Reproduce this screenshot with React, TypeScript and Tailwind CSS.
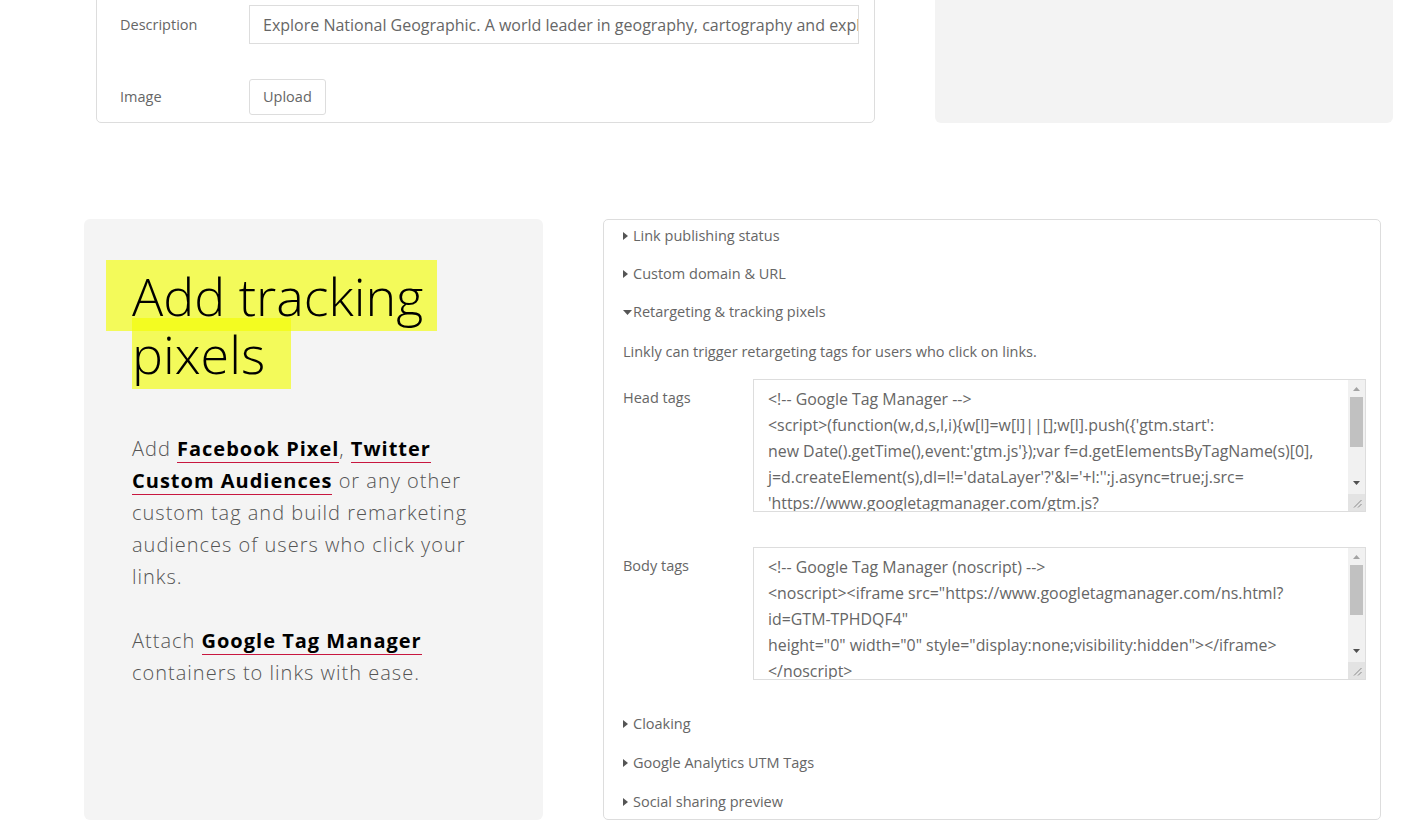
import type { ReactNode } from 'react';

const headLines = [
  '<!-- Google Tag Manager -->',
  "<script>(function(w,d,s,l,i){w[l]=w[l]||[];w[l].push({'gtm.start':",
  "new Date().getTime(),event:'gtm.js'});var f=d.getElementsByTagName(s)[0],",
  "j=d.createElement(s),dl=l!='dataLayer'?'&l='+l:'';j.async=true;j.src=",
  "'https://www.googletagmanager.com/gtm.js?",
  "id='+i+dl;f.parentNode.insertBefore(j,f);",
];

const bodyLines = [
  '<!-- Google Tag Manager (noscript) -->',
  '<noscript><iframe src="https://www.googletagmanager.com/ns.html?',
  'id=GTM-TPHDQF4"',
  'height="0" width="0" style="display:none;visibility:hidden"></iframe>',
  '</noscript>',
  '<!-- End Google Tag Manager (noscript) -->',
];

function Caret({ open }: { open?: boolean }) {
  if (open)
    return (
      <svg width="9" height="5" viewBox="0 0 9 5" className="mr-[1px]">
        <path d="M0 0h9L4.5 5z" fill="#555" />
      </svg>
    );
  return (
    <svg width="5" height="8" viewBox="0 0 5 8" className="mr-[5px]">
      <path d="M0 0l5 4-5 4z" fill="#555" />
    </svg>
  );
}

function Toggle({ label, open, className = '' }: { label: string; open?: boolean; className?: string }) {
  return (
    <div className={`flex h-[20px] items-center text-[14.5px] text-[#666] ${className}`}>
      <Caret open={open} />
      <span>{label}</span>
    </div>
  );
}

function CodeBox({ lines }: { lines: string[] }) {
  return (
    <div className="flex h-[133px] flex-1 border border-[#ddd] bg-white">
      <div className="flex-1 overflow-hidden pl-[14px] pt-[6px] text-[15.9px] leading-[26px] text-[#666]">
        {lines.map((l, i) => (
          <div key={i} className="whitespace-pre">
            {l}
          </div>
        ))}
      </div>
      <div className="flex w-[17px] flex-col bg-[#f1f1f1]">
        <div className="flex h-[17px] items-center justify-center">
          <svg width="7" height="4" viewBox="0 0 7 4">
            <path d="M3.5 0L7 4H0z" fill="#a3a3a3" />
          </svg>
        </div>
        <div className="mx-[2px] h-[50px] bg-[#c1c1c1]" />
        <div className="flex-1" />
        <div className="flex h-[17px] items-center justify-center">
          <svg width="7" height="4" viewBox="0 0 7 4">
            <path d="M0 0h7L3.5 4z" fill="#505050" />
          </svg>
        </div>
        <div className="mt-[3px] flex h-[17px] items-end justify-end bg-[#e3e3e3] p-[3px]">
          <svg width="9" height="9" viewBox="0 0 9 9">
            <path d="M1 8.5L8.5 1M5 8.5L8.5 5" stroke="#888" strokeWidth="1" />
          </svg>
        </div>
      </div>
    </div>
  );
}

function Link({ children }: { children: ReactNode }) {
  return <span className="border-b-[1.5px] border-[#c8173f] font-bold text-black">{children}</span>;
}

export default function App() {
  return (
    <div className="min-h-screen overflow-hidden bg-white font-['Open_Sans',sans-serif]">
      <div className="flex gap-[60px] pl-[96px]">
        <div className="-mt-[10px] w-[779px] rounded-[5px] border border-[#ddd] pb-[6px] pl-[23px] pr-[15px] pt-[14px]">
          <div className="flex items-center">
            <div className="w-[129px] text-[14.5px] text-[#666]">Description</div>
            <div className="flex h-[39px] flex-1 items-center overflow-hidden border border-[#ddd] pl-[13px] text-[16px] text-[#666]">
              <span className="whitespace-nowrap">
                Explore National Geographic. A world leader in geography, cartography and exploration.
              </span>
            </div>
          </div>
          <div className="mt-[35px] flex items-center">
            <div className="w-[129px] text-[14.5px] text-[#666]">Image</div>
            <div className="flex h-[36px] items-center rounded-[3px] border border-[#ddd] px-[13px] text-[14.5px] text-[#666]">
              Upload
            </div>
          </div>
        </div>
        <div className="h-[123px] w-[458px] rounded-b-[6px] bg-[#f3f3f3]" />
      </div>

      <div className="mt-[96px] flex gap-[60px] pl-[84px]">
        <div className="w-[459px] rounded-[6px] bg-[#f4f4f4] pl-[48px] pr-[40px] pt-[48px]">
          <h2 className="text-[52px] font-light leading-[58px] text-black">
            <span className="-ml-[26px] bg-[rgba(242,253,0,0.63)] pl-[26px] pr-[14px]">Add tracking</span>
            <br />
            <span className="bg-[rgba(242,253,0,0.63)] pr-[26px]">pixels</span>
          </h2>
          <p className="mt-[50px] text-[20px] font-light leading-[32px] tracking-[1px] text-[#555]">
            Add <Link>Facebook Pixel</Link>, <Link>Twitter Custom Audiences</Link> or any other custom tag and build
            remarketing audiences of users who click your links.
          </p>
          <p className="mt-[32px] text-[20px] font-light leading-[32px] tracking-[1px] text-[#555]">
            Attach <Link>Google Tag Manager</Link> containers to links with ease.
          </p>
        </div>

        <div className="h-[601px] w-[778px] rounded-[5px] border border-[#ddd] pl-[19px] pr-[14px] pt-[6px]">
          <Toggle label="Link publishing status" />
          <Toggle label="Custom domain & URL" className="mt-[18px]" />
          <Toggle label="Retargeting & tracking pixels" open className="mt-[18px]" />
          <div className="mt-[20px] h-[20px] text-[14.5px] leading-[20px] text-[#666]">
            Linkly can trigger retargeting tags for users who click on links.
          </div>
          <div className="mt-[17px] flex">
            <div className="w-[130px] pt-[8px] text-[14.5px] text-[#666]">Head tags</div>
            <CodeBox lines={headLines} />
          </div>
          <div className="mt-[35px] flex">
            <div className="w-[130px] pt-[8px] text-[14.5px] text-[#666]">Body tags</div>
            <CodeBox lines={bodyLines} />
          </div>
          <Toggle label="Cloaking" className="mt-[34px]" />
          <Toggle label="Google Analytics UTM Tags" className="mt-[19px]" />
          <Toggle label="Social sharing preview" className="mt-[19px]" />
        </div>
      </div>
    </div>
  );
}
